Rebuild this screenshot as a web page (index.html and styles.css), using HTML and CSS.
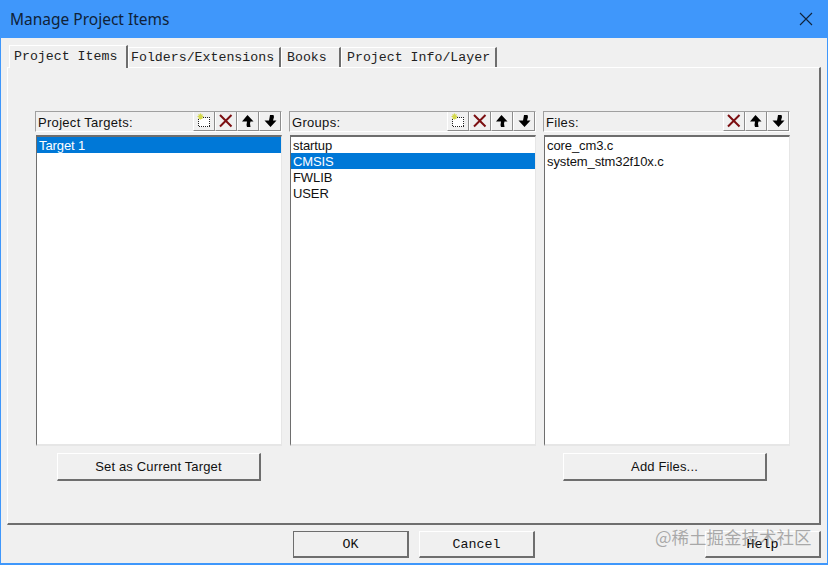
FILE: index.html
```html
<!DOCTYPE html>
<html lang="en">
<head>
<meta charset="utf-8">
<title>Manage Project Items</title>
<link rel="stylesheet" href="styles.css">
</head>
<body>
<svg class="defs" width="0" height="0" aria-hidden="true">
  <symbol id="i-new" viewBox="0 0 16 16">
    <rect x="2.5" y="4.5" width="11" height="9" fill="#fff" stroke="#222" stroke-dasharray="1 1" shape-rendering="crispEdges"/>
    <path d="M4.5 0.5v6M1.5 3.5h6M2.5 1.5l4 4M6.5 1.5l-4 4" stroke="#d4d84c" stroke-width="1.2"/>
  </symbol>
  <symbol id="i-del" viewBox="0 0 16 16">
    <path d="M2 2l11.500 11.500M13.500 2L2 13.500" stroke="#7c0f12" stroke-width="2" fill="none"/>
  </symbol>
  <symbol id="i-up" viewBox="0 0 16 16">
    <path d="M7.500 2l6 6.500h-3l-.5 2 .5 3.500H7l-.5-2 .5-3.500H2z" fill="#000"/>
  </symbol>
  <symbol id="i-down" viewBox="0 0 16 16">
    <path d="M8 2h3.500l.5 2-1 3.500h3.500l-6 6.500-6-6.500h4.500l.5-2.500z" fill="#000"/>
  </symbol>
</svg>
<div class="window">
  <header class="titlebar">
    <h1 class="title">Manage Project Items</h1>
    <svg class="close" width="14" height="14" viewBox="0 0 14 14"><path d="M1 1l12 12M13 1L1 13" stroke="#10233a" stroke-width="1.1"/></svg>
  </header>
  <div class="content">
    <nav class="tabs">
      <span class="tab active">Project Items</span>
      <span class="tab tab-folders">Folders/Extensions</span>
      <span class="tab tab-books">Books</span>
      <span class="tab tab-info">Project Info/Layer</span>
    </nav>
    <section class="panel">
      <div class="columns">
        <div class="column">
          <div class="head">
            <span class="head-label">Project Targets:</span>
            <span class="tools">
              <span class="tool"><svg width="16" height="16"><use href="#i-new"/></svg></span>
              <span class="tool"><svg width="16" height="16"><use href="#i-del"/></svg></span>
              <span class="tool"><svg width="16" height="16"><use href="#i-up"/></svg></span>
              <span class="tool"><svg width="16" height="16"><use href="#i-down"/></svg></span>
            </span>
          </div>
          <ul class="list">
            <li class="selected">Target 1</li>
          </ul>
          <div class="action"><button class="btn">Set as Current Target</button></div>
        </div>
        <div class="column">
          <div class="head">
            <span class="head-label">Groups:</span>
            <span class="tools">
              <span class="tool"><svg width="16" height="16"><use href="#i-new"/></svg></span>
              <span class="tool"><svg width="16" height="16"><use href="#i-del"/></svg></span>
              <span class="tool"><svg width="16" height="16"><use href="#i-up"/></svg></span>
              <span class="tool"><svg width="16" height="16"><use href="#i-down"/></svg></span>
            </span>
          </div>
          <ul class="list">
            <li>startup</li>
            <li class="selected">CMSIS</li>
            <li>FWLIB</li>
            <li>USER</li>
          </ul>
          <div class="action"></div>
        </div>
        <div class="column">
          <div class="head">
            <span class="head-label">Files:</span>
            <span class="tools">
              <span class="tool"><svg width="16" height="16"><use href="#i-del"/></svg></span>
              <span class="tool"><svg width="16" height="16"><use href="#i-up"/></svg></span>
              <span class="tool"><svg width="16" height="16"><use href="#i-down"/></svg></span>
            </span>
          </div>
          <ul class="list">
            <li>core_cm3.c</li>
            <li>system_stm32f10x.c</li>
          </ul>
          <div class="action action-files"><button class="btn">Add Files...</button></div>
        </div>
      </div>
    </section>
    <footer class="footer">
      <button class="dlg default">OK</button>
      <button class="dlg">Cancel</button>
      <button class="dlg help">Help</button>
    </footer>
  </div>
  <div class="watermark">@稀土掘金技术社区</div>
</div>
</body>
</html>
```
FILE: styles.css
```css
* { box-sizing: border-box; }
html, body { margin: 0; padding: 0; }
body {
  width: 828px;
  height: 565px;
  overflow: hidden;
  background: #f0f0f0;
  font-family: "Liberation Sans", Arial, sans-serif;
}
.defs { position: absolute; }
.window {
  position: relative;
  width: 828px;
  height: 565px;
  display: flex;
  flex-direction: column;
  background: #f0f0f0;
  border: solid #3f97fb;
  border-width: 0 1px 2px 1px;
}
.titlebar {
  height: 38px;
  margin: 0 -1px;
  flex: none;
  display: flex;
  align-items: center;
  justify-content: space-between;
  padding: 0 15px 0 10px;
  background: #3f97fb;
}
.title {
  margin: 0;
  font: 400 15.5px "Noto Sans", "Open Sans", sans-serif;
  color: #0f2238;
}
.content {
  flex: 1;
  padding: 6px 6px 0 6px;
  display: flex;
  flex-direction: column;
}
.tabs {
  height: 23px;
  display: flex;
  align-items: flex-end;
  padding-left: 2px;
  flex: none;
}
.tab {
  height: 20px;
  padding-top: 2px;
  font: 13.25px/16px "Liberation Mono", "Courier New", monospace;
  color: #222;
  background: #f0f0f0;
  border-top: 1px solid #fff;
  border-left: 1px solid #fff;
  border-right: 2px solid #6e6e6e;
  white-space: pre;
}
.tab.active {
  width: 119px;
  height: 23px;
  padding-top: 3px;
  padding-left: 4px;
  position: relative;
  z-index: 1;
  margin-bottom: -1px;
}
.tab-folders { width: 153px; padding-left: 2px; }
.tab-books { width: 60px; padding-left: 5px; }
.tab-info { width: 156px; padding-left: 5px; }
.panel {
  height: 458px;
  flex: none;
  border-top: 1px solid #fff;
  border-left: 1px solid #fff;
  border-right: 2px solid #6e6e6e;
  border-bottom: 2px solid #6e6e6e;
  padding: 43px 29px 0 28px;
}
.columns {
  display: flex;
  gap: 8px;
}
.column {
  width: 246px;
  display: flex;
  flex-direction: column;
}
.head {
  height: 21px;
  margin-left: -1px;
  width: 247px;
  display: flex;
  align-items: center;
  justify-content: space-between;
  padding-left: 2px;
  border: 1px solid #a0a0a0;
  border-right-color: #fff;
  border-bottom-color: #fff;
  font-size: 13px;
  letter-spacing: .3px;
  color: #111;
}
.head-label { padding-top: 2px; }
.tools {
  display: flex;
  align-self: stretch;
}
.tool {
  width: 22px;
  display: flex;
  align-items: center;
  justify-content: center;
  border-right: 1px solid #8c8c8c;
  border-bottom: 1px solid #8c8c8c;
  border-left: 1px solid #fff;
}
.list {
  list-style: none;
  margin: 3px 0 0;
  padding: 0;
  height: 311px;
  background: #fff;
  border-top: 2px solid #6e6e6e;
  border-left: 1px solid #6e6e6e;
  border-right: 1px solid #e6e6e6;
  border-bottom: 2px solid #e6e6e6;
  font-size: 13px;
  line-height: 17px;
  color: #111;
}
.list li { padding-left: 2px; height: 16px; white-space: pre; letter-spacing: -.1px; }
.list .selected { background: #0078d7; color: #fff; }
.action {
  height: 28px;
  margin-top: 7px;
  display: flex;
  justify-content: center;
}
.action-files { padding-right: 4px; }
.btn {
  width: 204px;
  height: 28px;
  padding: 0;
  background: #f0f0f0;
  border: 1px solid #fff;
  border-right: 2px solid #6e6e6e;
  border-bottom: 2px solid #6e6e6e;
  font: 13px "Liberation Sans", Arial, sans-serif;
  letter-spacing: .15px;
  color: #111;
}
.footer {
  position: relative;
  height: 27px;
  margin-top: 6px;
  display: flex;
  gap: 10px;
  padding-left: 286px;
  flex: none;
}
.dlg {
  width: 116px;
  height: 27px;
  padding: 0;
  background: #f0f0f0;
  border: 1px solid #fff;
  border-right: 2px solid #6e6e6e;
  border-bottom: 2px solid #6e6e6e;
  font: 13.33px "Liberation Mono", "Courier New", monospace;
  color: #111;
}
.default {
  border: 1px solid #6e6e6e;
  border-right: 2px solid #6e6e6e;
  border-bottom: 2px solid #6e6e6e;
}
.help {
  margin-left: auto;
  text-align: center;
  color: #000;
}
.watermark {
  position: absolute;
  left: 654px;
  top: 524px;
  font: 17.5px "Noto Sans CJK SC", sans-serif;
  color: rgba(120, 120, 120, .6);
  white-space: nowrap;
  pointer-events: none;
}
```
